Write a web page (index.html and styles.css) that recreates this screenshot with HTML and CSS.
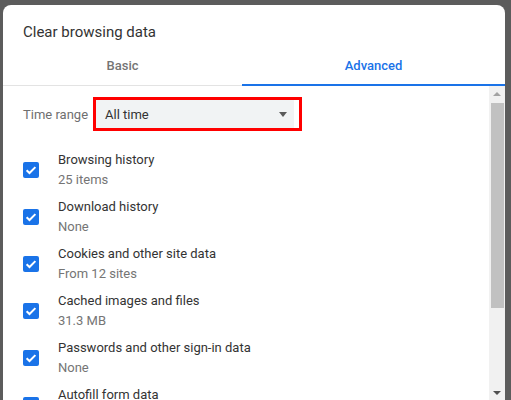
FILE: index.html
```html
<!DOCTYPE html>
<html lang="en">
<head>
  <meta charset="UTF-8" />
  <meta name="viewport" content="width=device-width, initial-scale=1.0" />
  <title>Clear browsing data</title>
  <link rel="stylesheet" href="styles.css">
</head>
<body>

<div class="dialog">
  <h1 class="title">Clear browsing data</h1>

  <div class="tabs">
    <div class="tab">Basic</div>
    <div class="tab active">Advanced</div>
  </div>

  <div class="body">
    <div class="content">
      <div class="time-row">
        <span class="time-label">Time range</span>
        <div class="highlight">
          <div class="select">
            <span>All time</span>
            <span class="caret"></span>
          </div>
        </div>
      </div>

      <div class="item">
        <span class="box"><svg viewBox="0 0 16 16"><path d="M3.6 8.2l2.9 2.8 5.9-5.9" /></svg></span>
        <div class="text">
          <div class="name">Browsing history</div>
          <div class="sub">25 items</div>
        </div>
      </div>
      <div class="item">
        <span class="box"><svg viewBox="0 0 16 16"><path d="M3.6 8.2l2.9 2.8 5.9-5.9" /></svg></span>
        <div class="text">
          <div class="name">Download history</div>
          <div class="sub">None</div>
        </div>
      </div>
      <div class="item">
        <span class="box"><svg viewBox="0 0 16 16"><path d="M3.6 8.2l2.9 2.8 5.9-5.9" /></svg></span>
        <div class="text">
          <div class="name">Cookies and other site data</div>
          <div class="sub">From 12 sites</div>
        </div>
      </div>
      <div class="item">
        <span class="box"><svg viewBox="0 0 16 16"><path d="M3.6 8.2l2.9 2.8 5.9-5.9" /></svg></span>
        <div class="text">
          <div class="name">Cached images and files</div>
          <div class="sub">31.3 MB</div>
        </div>
      </div>
      <div class="item">
        <span class="box"><svg viewBox="0 0 16 16"><path d="M3.6 8.2l2.9 2.8 5.9-5.9" /></svg></span>
        <div class="text">
          <div class="name">Passwords and other sign-in data</div>
          <div class="sub">None</div>
        </div>
      </div>
      <div class="item">
        <span class="box"><svg viewBox="0 0 16 16"><path d="M3.6 8.2l2.9 2.8 5.9-5.9" /></svg></span>
        <div class="text">
          <div class="name">Autofill form data</div>
          <div class="sub">None</div>
        </div>
      </div>
    </div>

    <div class="scrollbar">
      <div class="arrow"><span class="up"></span></div>
      <div class="thumb"></div>
      <div class="track"></div>
      <div class="arrow"><span class="down"></span></div>
    </div>
  </div>
</div>

</body>
</html>
```

FILE: styles.css
```css
html, body {
  height: 400px;
  overflow: hidden;
}
body {
  margin: 0;
  background: #5c5c5c;
  font-family: Roboto, 'Liberation Sans', sans-serif;
  font-size: 13px;
  color: #333;
}
.dialog {
  margin: 5px 6px 0 3px;
  height: 396px;
  background: white;
  border-radius: 8px 8px 0 0;
  display: flex;
  flex-direction: column;
  overflow: hidden;
}
.title {
  margin: 0;
  padding: 15px 20px 0;
  font-size: 15px;
  font-weight: normal;
  line-height: 24px;
  color: #333;
}
.tabs {
  display: flex;
  border-bottom: 1px solid #e3e3e3;
}
.tab {
  height: 42px;
  line-height: 40px;
  text-align: center;
  font-weight: 500;
  color: #757575;
  border-bottom: 2px solid transparent;
  margin-bottom: -1px;
  box-sizing: border-box;
  padding-top: 2px;
}
.tab:first-child {
  width: 239px;
}
.tab.active {
  flex: 1;
  color: #1a73e8;
  border-bottom-color: #1a73e8;
}
.body {
  flex: 1;
  display: flex;
  min-height: 0;
}
.content {
  flex: 1;
  padding: 11px 0 0 20px;
  overflow: hidden;
}
.time-row {
  display: flex;
  align-items: center;
  margin-bottom: 15px;
}
.time-label {
  color: #6f6f6f;
  width: 70px;
}
.highlight {
  border: 3px solid #f00;
  padding-right: 5px;
}
.select {
  width: 198px;
  height: 28px;
  background: #f1f3f4;
  display: flex;
  align-items: center;
  justify-content: space-between;
  padding: 0 7px 0 9px;
  box-sizing: border-box;
  color: #333;
}
.caret {
  border-left: 4.5px solid transparent;
  border-right: 4.5px solid transparent;
  border-top: 5px solid #5a5a5a;
}
.item {
  display: flex;
  align-items: center;
  height: 47px;
}
.box {
  width: 16px;
  height: 16px;
  border-radius: 2px;
  background: #1a73e8;
  margin-right: 19px;
  flex-shrink: 0;
}
.box svg {
  display: block;
  width: 16px;
  height: 16px;
  fill: none;
  stroke: white;
  stroke-width: 2;
}
.name, .sub {
  line-height: 20px;
}
.sub {
  color: #757575;
}
.scrollbar {
  width: 16px;
  background: #f1f1f1;
  display: flex;
  flex-direction: column;
}
.arrow {
  height: 16px;
  display: flex;
  align-items: center;
  justify-content: center;
}
.up {
  border-left: 4px solid transparent;
  border-right: 4px solid transparent;
  border-bottom: 4px solid #a3a3a3;
}
.down {
  border-left: 4px solid transparent;
  border-right: 4px solid transparent;
  border-top: 4px solid #505050;
}
.thumb {
  height: 205px;
  margin: 1px 1px 0 2px;
  background: #c1c1c1;
}
.track {
  flex: 1;
}
```
